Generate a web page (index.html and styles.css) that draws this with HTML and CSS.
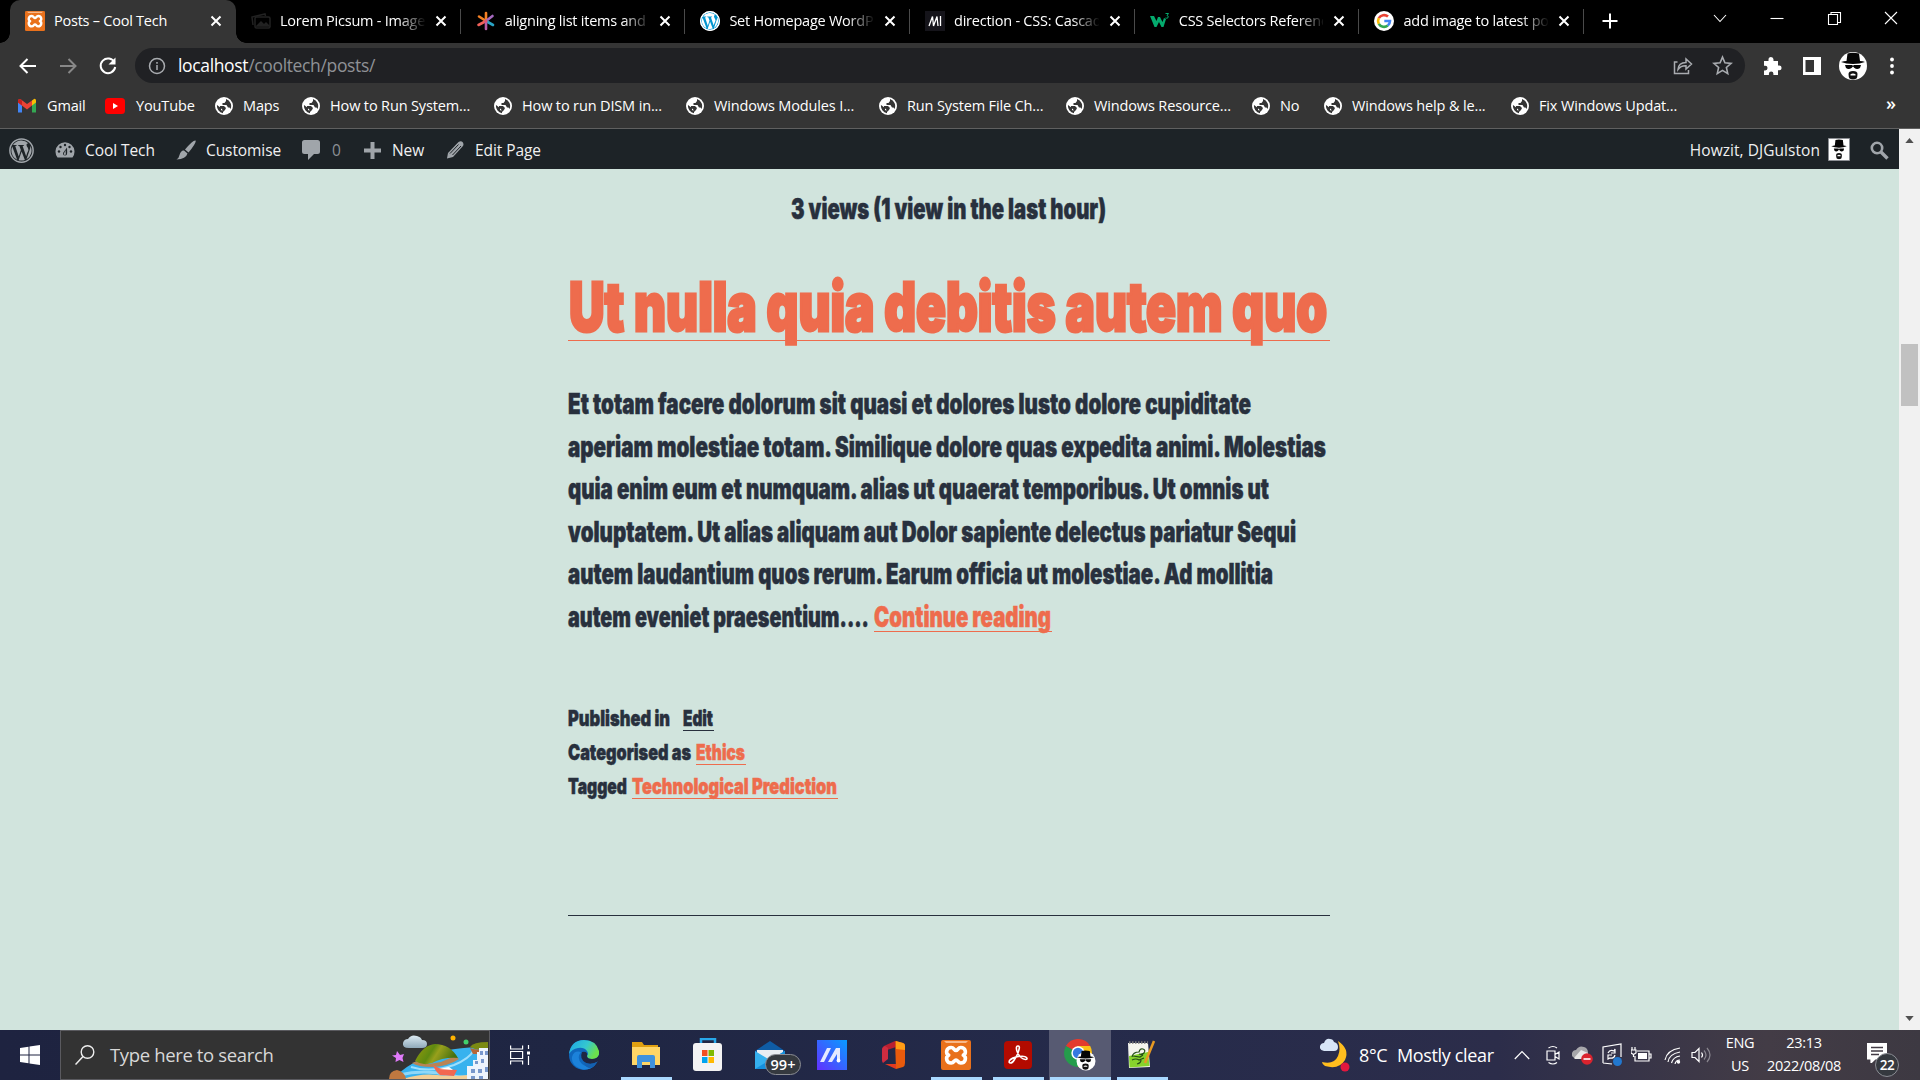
FILE: index.html
```html
<!DOCTYPE html>
<html lang="en">
<head>
<meta charset="utf-8">
<title>Posts – Cool Tech</title>
<link rel="stylesheet" href="styles.css">
</head>
<body>
<svg class="defs" width="0" height="0" aria-hidden="true">
  <defs>
    <symbol id="close" viewBox="0 0 12 12"><path d="M1.5 1.5l9 9M10.500 1.500l-9 9" stroke="#fff" stroke-width="2" fill="none"/></symbol>
    <symbol id="globe" viewBox="0 0 18 18"><circle cx="9" cy="9" r="9" fill="#fff"/><path d="M2 8l4 3v2l2 1v2.200A7.300 7.300 0 0 1 2 8zM11 2v2l-1.500 2H7.500v2h4l1.500 2.500h1.500l1 1.500A7.300 7.300 0 0 0 11 2zM5 9h4l2 2-1 2-2 2-1-3-2-1z" fill="#353535"/></symbol>
    <symbol id="xampp" viewBox="0 0 30 30"><rect width="30" height="30" rx="2" fill="#e9711c"/><path d="M3 1h24l-2 2H5z" fill="#f7b88a"/><path d="M10.200 7.500c-5 0-6 6-2.500 7.700-3.500 1.700-2.500 7.800 2.500 7.800 2.800 0 3-3 4.800-3s2 3 4.800 3c5 0 6-6.100 2.500-7.800 3.500-1.700 2.500-7.700-2.500-7.700-2.800 0-3 3-4.800 3s-2-3-4.800-3z" fill="none" stroke="#fff" stroke-width="3.600" stroke-linejoin="round"/></symbol>
    <symbol id="face" viewBox="0 0 28 28"><path d="M7.500 9L8.500 1.500q5-1.500 11.500 0L21 9q3 0 5 1-5 2-12 2T2 10q3-1 5.500-1zM6 13h7l1 .8 1-.8h7l-1 3q-3 2-5.500 0L14 14.500 12.500 16q-3 2-5.500 0z" fill="#050505"/><path d="M9.500 22q0-3 4.500-3t4.500 3-1 4.500q-3.500 2-7 0-1-1.500-1-4.500z" fill="#111"/><path d="M11.500 22.300q2.500-1.500 5 0v1.300h-5z" fill="#fff"/></symbol>
    <symbol id="wp" viewBox="0 0 20 20"><circle cx="10" cy="10" r="9.300" fill="none" stroke="currentColor" stroke-width="1.200"/><path d="M1.900 10A8.100 8.100 0 0 0 6.500 17.300L2.600 6.700A8 8 0 0 0 1.900 10zM15.500 9.600c0-1-.4-1.700-.7-2.200-.4-.7-.8-1.200-.8-1.900 0-.7.500-1.400 1.400-1.400A8.100 8.100 0 0 0 3.200 5.600h.5c.8 0 2.200-.1 2.200-.1.400 0 .5.600 0 .7l-.9.100 2.800 8.400 1.700-5.100L8.300 6.300 7.500 6.200c-.4 0-.4-.7 0-.7 0 0 1.300.1 2.100.1s2.200-.1 2.200-.1c.4 0 .5.600 0 .7l-.9.100 2.800 8.300.8-2.600c.6-1.100 1-1.800 1-2.400zM10.100 10.700l-2.400 7a8 8 0 0 0 5-.1zM17.100 6.100c.1 1.300-.1 2.300-.6 3.400L14 16.900A8.100 8.100 0 0 0 17.100 6.100z" fill="currentColor"/></symbol>
  </defs>
</svg>

<header class="tabs">
  <div class="tab active">
    <svg class="fav" viewBox="0 0 30 30"><use href="#xampp"/></svg><span class="tab-title">Posts – Cool Tech</span><svg class="x"><use href="#close"/></svg>
  </div>
  <div class="tab">
    <svg class="fav" viewBox="0 0 20 20" fill="none" stroke="#222" stroke-width="1.500"><path d="M2 14L1 6l13-3 .5 2"/><rect x="4" y="6" width="15" height="11" rx="1.500"/><path d="M6 15l4-4 3 3 2-2 3 3z" fill="#222"/></svg><span class="tab-title fade">Lorem Picsum - Images</span><svg class="x"><use href="#close"/></svg>
  </div>
  <div class="tab">
    <svg class="fav" viewBox="0 0 20 20" fill="none" stroke-width="2.600" stroke-linecap="round"><path d="M10 10V2" stroke="#f48024"/><path d="M10 10L3 5.500" stroke="#f48024"/><path d="M10 10l-7.500 4" stroke="#f0605a"/><path d="M10 10l6.500-5" stroke="#a66ac0"/><path d="M10 10l7 4" stroke="#29a3c4"/><path d="M10 10v8" stroke="#b75ca8"/><circle cx="10" cy="10" r="1.500" fill="#e34f6f"/></svg><span class="tab-title fade">aligning list items and text</span><svg class="x"><use href="#close"/></svg>
  </div>
  <div class="tab">
    <svg class="fav" viewBox="0 0 20 20"><circle cx="10" cy="10" r="10" fill="#fff"/><circle cx="10" cy="10" r="9" fill="#0096d0"/><svg width="20" height="20" color="#fff"><use href="#wp"/></svg></svg><span class="tab-title fade">Set Homepage WordPress</span><svg class="x"><use href="#close"/></svg>
  </div>
  <div class="tab">
    <svg class="fav" viewBox="0 0 20 20"><rect width="20" height="20" fill="#15141a"/><path d="M4 15L7.500 5.500 8.500 15 12 5.500 13 15M15.500 5v10" fill="none" stroke="#fff" stroke-width="1.300"/></svg><span class="tab-title fade">direction - CSS: Cascading</span><svg class="x"><use href="#close"/></svg>
  </div>
  <div class="tab">
    <svg class="fav" viewBox="0 0 20 20"><path d="M0 5h4l2.500 5L8 6h2l2.500 5L14 7l2 1-2.500 8h-2L9 11l-2.500 5h-2z" fill="#04aa6d"/><path d="M15.500 2.500h3l-1.500 2q2 .5 1 2.200-1 1-2.500.2" fill="none" stroke="#04aa6d"/></svg><span class="tab-title fade">CSS Selectors Reference</span><svg class="x"><use href="#close"/></svg>
  </div>
  <div class="tab">
    <svg class="fav" viewBox="0 0 20 20" fill="none" stroke-width="2.600"><circle cx="10" cy="10" r="10" fill="#fff"/><path d="M14 5.600A6 6 0 0 0 4.800 7.200" stroke="#ea4335"/><path d="M4.800 7.200a6 6 0 0 0 0 5.600" stroke="#fbbc05"/><path d="M4.800 12.800a6 6 0 0 0 9 1.700" stroke="#34a853"/><path d="M13.800 14.500A6 6 0 0 0 16 10h-5.700" stroke="#4285f4"/></svg><span class="tab-title fade">add image to latest posts</span><svg class="x"><use href="#close"/></svg>
  </div>
  <svg class="plus" viewBox="0 0 16 16"><path d="M8 .5v15M.5 8h15" stroke="#fff" stroke-width="2"/></svg>
  <div class="window-buttons">
    <svg viewBox="0 0 16 16"><path d="M2 5l6 6.500L14 5" /></svg>
    <svg viewBox="0 0 16 16"><path d="M1.500 8.500h13"/></svg>
    <svg viewBox="0 0 16 16"><path d="M2.500 4.500h9v10h-9zM5 4V2.500h9.500v10H12"/></svg>
    <svg viewBox="0 0 16 16"><path d="M2 2l12 12M14 2L2 14"/></svg>
  </div>
</header>

<div class="toolbar">
  <svg class="nav" viewBox="0 0 20 20"><path d="M18 10H3M9.500 3L2.500 10l7 7" stroke="#fff"/></svg>
  <svg class="nav" viewBox="0 0 20 20"><path d="M2 10h15M10.500 3l7 7-7 7" stroke="#888"/></svg>
  <svg class="nav" viewBox="0 0 20 20"><path d="M16.500 6.500A7.300 7.300 0 1 0 17.200 11" stroke="#fff"/><path d="M17.500 1.500v7h-7z" fill="#fff"/></svg>
  <div class="omnibox">
    <svg class="info" viewBox="0 0 18 18"><circle cx="9" cy="9" r="7.500"/><path d="M9 8v5M9 5v1.700"/></svg>
    <span class="url"><b>localhost</b>/cooltech/posts/</span>
    <svg class="share" viewBox="0 0 20 20"><path d="M4.500 6H1.500v11.500h14V14M5 13.500q.5-7 8-7V3l5.500 5-5.500 5V9.800q-5-.3-8 3.700z"/></svg>
    <svg class="star" viewBox="0 0 20 20"><path d="M10 2l2.300 5.500 5.900.5-4.500 3.900L15 17.700l-5-3.100-5 3.100 1.300-5.800L1.800 8l5.900-.5z"/></svg>
  </div>
  <svg class="ext" viewBox="0 0 20 20"><path d="M2 5h4.500V3.500a2.500 2.500 0 0 1 5 0V5H16v4.500h1.200a2.400 2.400 0 0 1 0 4.800H16V19h-4.600v-1.300a2.200 2.200 0 0 0-4.500 0V19H2v-4.600h1.200a2.300 2.300 0 0 0 0-4.700H2z" fill="#fff"/></svg>
  <svg class="panel" viewBox="0 0 18 18"><path d="M0 0h18v18H0z" fill="#fff"/><path d="M2.500 3h8.500v12H2.500z" fill="#353535"/></svg>
  <svg class="avatar" viewBox="0 0 28 28"><circle cx="14" cy="14" r="14" fill="#fff"/><use href="#face"/></svg>
  <svg class="dots" viewBox="0 0 4 18"><circle cx="2" cy="2.500" r="1.900" fill="#fff"/><circle cx="2" cy="9" r="1.900" fill="#fff"/><circle cx="2" cy="15.500" r="1.900" fill="#fff"/></svg>
</div>

<nav class="bookmarks">
  <span><svg class="gm" viewBox="0 0 18 14"><path d="M0 2v12h4V6z" fill="#4285f4"/><path d="M18 2v12h-4V6z" fill="#34a853"/><path d="M14 2l2-1.600Q18 0 18 2v2l-4 3z" fill="#fbbc04"/><path d="M0 4V2Q.5-.5 3 1l6 4.500L14 2v5l-5 4z" fill="#ea4335"/><path d="M0 2Q.5-.5 3 1l1 1v5L0 4z" fill="#c5221f"/></svg>Gmail</span>
  <span><svg class="yt" viewBox="0 0 20 16"><rect width="20" height="16" rx="3.500" fill="red"/><path d="M8 5v6l5-3z" fill="#fff"/></svg>YouTube</span>
  <span><svg class="gl"><use href="#globe"/></svg>Maps</span>
  <span><svg class="gl"><use href="#globe"/></svg>How to Run System...</span>
  <span><svg class="gl"><use href="#globe"/></svg>How to run DISM in...</span>
  <span><svg class="gl"><use href="#globe"/></svg>Windows Modules I...</span>
  <span><svg class="gl"><use href="#globe"/></svg>Run System File Ch...</span>
  <span><svg class="gl"><use href="#globe"/></svg>Windows Resource...</span>
  <span><svg class="gl"><use href="#globe"/></svg>No</span>
  <span><svg class="gl"><use href="#globe"/></svg>Windows help &amp; le...</span>
  <span><svg class="gl"><use href="#globe"/></svg>Fix Windows Updat...</span>
  <span class="more">»</span>
</nav>

<div class="viewport">
  <div class="page">
    <div class="adminbar">
      <span><svg class="i-wp"><use href="#wp"/></svg></span>
      <span><svg class="i-20" viewBox="0 0 20 20"><path d="M2.500 17.500A9.500 9.500 0 1 1 17.500 17.500z" fill="#a0a5aa"/><g fill="#1d2327"><circle cx="4" cy="11.500" r="1.200"/><circle cx="5.500" cy="7" r="1.200"/><circle cx="10" cy="5" r="1.200"/><circle cx="14.500" cy="7" r="1.200"/><circle cx="16" cy="11.500" r="1.200"/><path d="M12 7.500l.2 5.500q0 2.500-2.200 2.500t-2-2.500z"/></g><path d="M10.500 10l.3 3.500a1 1 0 1 1-1.700-.3z" fill="#a0a5aa"/></svg>Cool Tech</span>
      <span><svg class="i-20" viewBox="0 0 20 20"><path d="M19.500.5Q21 2 12.500 12.500L9 9.500Q17 0 19.500.5zM8 10.500l3.500 3Q10 19 .5 19.500 3 18 3.500 15 5 10 8 10.500z" fill="#a0a5aa"/></svg>Customise</span>
      <span class="count"><svg class="i-cm" viewBox="0 0 18 20"><path d="M2.500 0h13Q18 0 18 2.500v9q0 2.500-2.500 2.500H12l-6 6v-6H2.500Q0 14 0 11.500v-9Q0 0 2.500 0z" fill="#a0a5aa"/></svg>0</span>
      <span><svg class="i-pl" viewBox="0 0 17 17"><path d="M8.500 0v17M0 8.500h17" stroke="#a0a5aa" stroke-width="4"/></svg>New</span>
      <span><svg class="i-ed" viewBox="0 0 18 18"><path d="M12.500 1q2.500-1.500 4 0t.5 4l-10 11L1 17.500 2 12z" fill="#a0a5aa"/><path d="M4 12.500l8.500-9M6.500 14l8.500-9" stroke="#1d2327" stroke-width="1"/></svg>Edit Page</span>
      <div class="me">
        <span>Howzit, DJGulston</span>
        <svg class="pic" viewBox="0 0 22 23"><path d="M.5.5h21v22H.5z" fill="#fff" stroke="#8c8f94"/><svg x="2" y="1" width="18" height="20.500" viewBox="0 0 28 28" preserveAspectRatio="none"><use href="#face"/></svg></svg>
        <svg class="find" viewBox="0 0 19 19"><circle cx="7" cy="7" r="5.200" fill="none" stroke="#a0a5aa" stroke-width="2.600"/><path d="M11 11l6.500 6.500" stroke="#a0a5aa" stroke-width="3.400"/></svg>
      </div>
    </div>

    <main class="post">
      <svg class="imp views" width="316" height="30"><text x="0" y="25" textLength="315" lengthAdjust="spacingAndGlyphs">3 views (1 view in the last hour)</text></svg>
      <h2><a><svg class="imp title" width="761" height="74"><text x="1" y="65" textLength="758" lengthAdjust="spacingAndGlyphs">Ut nulla quia debitis autem quo</text></svg></a></h2>
      <div class="excerpt">
        <p><svg class="imp" width="684" height="32"><text y="27" textLength="683" lengthAdjust="spacingAndGlyphs">Et totam facere dolorum sit quasi et dolores Iusto dolore cupiditate</text></svg></p>
        <p><svg class="imp" width="759" height="32"><text y="27" textLength="758" lengthAdjust="spacingAndGlyphs">aperiam molestiae totam. Similique dolore quas expedita animi. Molestias</text></svg></p>
        <p><svg class="imp" width="702" height="32"><text y="27" textLength="701" lengthAdjust="spacingAndGlyphs">quia enim eum et numquam. alias ut quaerat temporibus. Ut omnis ut</text></svg></p>
        <p><svg class="imp" width="729" height="32"><text y="27" textLength="728" lengthAdjust="spacingAndGlyphs">voluptatem. Ut alias aliquam aut Dolor sapiente delectus pariatur Sequi</text></svg></p>
        <p><svg class="imp" width="706" height="32"><text y="27" textLength="705" lengthAdjust="spacingAndGlyphs">autem laudantium quos rerum. Earum officia ut molestiae. Ad mollitia</text></svg></p>
        <p><svg class="imp" width="306" height="32"><text y="27" textLength="301" lengthAdjust="spacingAndGlyphs">autem eveniet praesentium....</text></svg><a><svg class="imp" width="178" height="31"><text y="27" textLength="177" lengthAdjust="spacingAndGlyphs">Continue reading</text></svg></a></p>
      </div>
      <div class="meta">
        <p><svg class="imp" width="115" height="25"><text y="21" textLength="102" lengthAdjust="spacingAndGlyphs">Published in</text></svg><a class="dark"><svg class="imp" width="31" height="25"><text y="21" textLength="30" lengthAdjust="spacingAndGlyphs">Edit</text></svg></a></p>
        <p><svg class="imp" width="128" height="25"><text y="21" textLength="123" lengthAdjust="spacingAndGlyphs">Categorised as</text></svg><a><svg class="imp" width="50" height="25"><text y="21" textLength="49" lengthAdjust="spacingAndGlyphs">Ethics</text></svg></a></p>
        <p><svg class="imp" width="64" height="25"><text y="21" textLength="59" lengthAdjust="spacingAndGlyphs">Tagged</text></svg><a><svg class="imp" width="206" height="25"><text y="21" textLength="205" lengthAdjust="spacingAndGlyphs">Technological Prediction</text></svg></a></p>
      </div>
    </main>
  </div>
  <div class="scrollbar">
    <svg viewBox="0 0 10 6"><path d="M0 6l5-6 5 6z" fill="#505050"/></svg>
    <div class="thumb"></div>
    <svg viewBox="0 0 10 6"><path d="M0 0l5 6 5-6z" fill="#505050"/></svg>
  </div>
</div>

<footer class="taskbar">
  <div class="start"><svg width="20" height="20" viewBox="0 0 20 20"><path d="M0 3l8.500-1.200v7.700H0zM9.500 1.600L20 0v9.500H9.500zM0 10.500h8.500v7.700L0 17zM9.500 10.500H20V20L9.500 18.400z" fill="#fff"/></svg></div>
  <div class="search">
    <svg width="20" height="20" viewBox="0 0 20 20"><circle cx="12.500" cy="7" r="6.300" fill="none" stroke="#eee" stroke-width="1.400"/><path d="M8 11.500L.5 19.500" stroke="#eee" stroke-width="1.500"/></svg>
    <span>Type here to search</span>
    <svg class="art" width="100" height="48" viewBox="0 0 100 48">
      <defs><linearGradient id="hill" x1="0" y1="0" x2="1" y2="0.300"><stop offset="0" stop-color="#9a9c0c"/><stop offset="0.450" stop-color="#5f8a10"/><stop offset="0.600" stop-color="#98a01c"/><stop offset="1" stop-color="#467010"/></linearGradient><linearGradient id="cloud" x2="0" y2="1"><stop offset="0" stop-color="#dcebf2"/><stop offset="1" stop-color="#8fa9ba"/></linearGradient></defs>
      <path d="M4 48Q14 36 38 25 60 16 99 16V48z" fill="#37b2ee"/><path d="M22 36q20 6 43-2 15-6 20-15" fill="none" stroke="#9edffc" stroke-width="2"/><path d="M10 44q25-6 50 0t35-4" fill="none" stroke="#8fd8f8" stroke-width="3"/>
      <path d="M14 48q18-6 34-4t30 0v4z" fill="#f3cf96"/>
      <path d="M23 32q8-4 17 1l12-2 14-6 4 3q-10 7-27 8-14 0-20-4z" fill="#b98455"/><path d="M26 30Q34 14 46 13q15 0 23 14-15-1-26 5-9 3-17-2z" fill="url(#hill)"/>
      <path d="M81 16q3-5 18-5v6q-9 4-18-1z" fill="#7b8a12"/><path d="M81 17q9 3 18 0v6H84z" fill="#b3683a"/>
      <path d="M78 35h6v-6h4v-8h2v-4h9v31H78z" fill="#edf4fc"/><g fill="#7898cc"><path d="M91 20h3v4h-3zM96 20h3v4h-3zM86 30h3v3h-3zM92 28h3v4h-3zM82 38h4v4h-4zM89 38h4v4h-4zM96 36h3v5h-3zM82 45h4v3h-4zM90 45h4v3h-4z"/></g>
      <path d="M44 34l6 3 18 2-3 6-14-1q-5-4-7-10z" fill="#f26850"/><path d="M50 38l10-2 4 3z" fill="#fff"/>
      <path d="M0 48q0-8 8-9 8 2 9 9z" fill="#bf7840"/>
      <path d="M20 17q-7 0-6-5 1-4 5-4 3-5 9-3 4 1 5 4 5 0 5 4t-5 4z" fill="url(#cloud)"/>
      <path d="M8 20l3 4 4-1-1.500 4 1 4-4-2-4 2 .5-4-4-2.500L7 24z" fill="#e17bfa"/><circle cx="64" cy="7" r="2.500" fill="#ffb300"/><circle cx="77" cy="11" r="2.500" fill="#42cf6c"/>
    </svg>
  </div>
  <div class="taskview"><svg width="20" height="20" viewBox="0 0 20 20" fill="none" stroke="#fff" stroke-width="1.200"><path d="M.6.500v3.500h12V.5M.6 19.500V16h12v3.500M.6 6.500h12v7H.6zM18.500 0v4M18.500 11v9"/><path d="M17 6.500h3v3h-3z" fill="#fff" stroke="none"/></svg></div>
  <div class="apps">
    <div class="app"><svg width="30" height="30" viewBox="0 0 30 30"><defs><linearGradient id="eg" x1="0" y1="0" x2="1" y2="0.400"><stop offset="0" stop-color="#1ba3e8"/><stop offset="0.600" stop-color="#35c8cf"/><stop offset="1" stop-color="#6be04c"/></linearGradient></defs><circle cx="15" cy="15" r="15" fill="#0f67bd"/><path d="M0 14Q2 0 15 0 27 0 30 11q1 8-7 8-5 0-5-3 2-2 0-5-3-4-9-3-6 1-9 6z" fill="url(#eg)"/><path d="M12 12q-5 6 1 12 6 5 13 1-6 6-14 4Q2 25 3 17q2-7 9-5z" fill="#1c82da"/><path d="M13 12q-3 7 4 11 5 2 11-1l2-2V15q-2 4-7 4-5 0-5-3 1-5-5-4z" fill="#1f2643"/><path d="M15 22q6 4 13 0-3 6-8 6-5-2-5-6z" fill="#1460b0"/></svg></div>
    <div class="app run"><svg width="30" height="28" viewBox="0 0 30 28"><path d="M1 1h10l2 3h14v6H1z" fill="#e0a010"/><path d="M1 6h28v18H1z" fill="#ffd666"/><path d="M6 27V16q0-2 2-2h14q2 0 2 2v11h-5v-6h-8v6z" fill="#3f92dd"/></svg></div>
    <div class="app"><svg width="30" height="34" viewBox="0 0 30 34"><path d="M8 7V1h14v6" fill="none" stroke="#28a8ea" stroke-width="2.500"/><rect y="5" width="29" height="28" rx="3" fill="#f3f3f3"/><path d="M9 12h5.500v6H9z" fill="#f25022"/><path d="M15.500 12H21v6h-5.500z" fill="#7fba00"/><path d="M9 19h5.500v6H9z" fill="#00a4ef"/><path d="M15.500 19H21v6h-5.500z" fill="#ffb900"/></svg></div>
    <div class="app"><svg width="30" height="28" viewBox="0 0 30 28"><path d="M0 10L15 0l15 10v10H0z" fill="#0f5ca5"/><path d="M2 9h26v9H2z" fill="#e9edf2"/><path d="M0 10l15 9 15-9v18H0z" fill="#35b0ee"/><path d="M0 28L28 11l2-1v18z" fill="#1590dc"/></svg><span class="badge">99+</span></div>
    <div class="app"><svg width="30" height="30" viewBox="0 0 30 30"><defs><linearGradient id="mg" x1="0" y1="1" x2="1" y2="0"><stop offset="0" stop-color="#6330ff"/><stop offset="1" stop-color="#079cff"/></linearGradient></defs><path d="M0 0h30v30H0z" fill="url(#mg)"/><path d="M3 22L10 8h4L7 22zM11 22l8-14h4v11h-3v-5l-5 8z" fill="#e5e9ff"/><circle cx="21.500" cy="20.500" r="1.900" fill="#fff"/></svg></div>
    <div class="app"><svg width="24" height="28" viewBox="0 0 24 28"><path d="M13 0L3 4.500Q0 6 0 9v11l5-2V9l9-3z" fill="#b92031"/><path d="M0 9Q0 6 3 5l3 2v11l-5 4q-1-1-1-3z" fill="#ce2c40"/><path d="M13 0l8 2q2 .5 2 3v17q0 3-2 4l-7 2z" fill="#e85a0c"/><path d="M14 0l7 2q2 .5 2 3v4l-9-1z" fill="#ff9d16"/><path d="M3 23h11v5z" fill="#e33a20"/></svg></div>
    <div class="app run"><svg width="30" height="30"><use href="#xampp"/></svg></div>
    <div class="app run"><svg width="28" height="28" viewBox="0 0 28 28"><rect width="28" height="28" rx="4" fill="#b30b00"/><path d="M12.500 8q-.5-3 1.500-3t1 3.500q-1 5-4.500 10-2 3.500-4 3.500t-1-2.500q2.500-3 9-4t8 1-1 2q-5-.5-8-7-1-2-1-3.500z" fill="none" stroke="#fff" stroke-width="1.600"/></svg></div>
    <div class="app run focus"><svg width="32" height="32" viewBox="0 0 32 32"><path d="M14 14L1.900 7A14 14 0 0 1 26.200 7z" fill="#e33b2e"/><path d="M14 14L1.900 7A14 14 0 0 0 14 28z" fill="#259c4c"/><path d="M14 14h14A14 14 0 0 0 26.200 7H13z" fill="#fbc116"/><path d="M14 14v14A14 14 0 0 0 28 14z" fill="#fbc116"/><circle cx="14" cy="14" r="6.700" fill="#fff"/><circle cx="14" cy="14" r="5.200" fill="#3679e0"/><circle cx="22" cy="22" r="9.500" fill="#fff"/><svg x="11.500" y="11" width="20" height="20" viewBox="0 0 28 28"><use href="#face"/></svg></svg></div>
    <div class="app run"><svg width="30" height="30" viewBox="0 0 30 30"><path d="M1 3h20l2 24-21 1z" fill="#f4f5ef"/><path d="M2 16l19-4 1.500 14-20 1.500z" fill="#86d32c"/><path d="M2 2.500h19" stroke="#777" stroke-width="2.500" stroke-dasharray="1.500 1.500"/><path d="M5 17q1-5 7-5 1-4 4-3t1 4q-2 2-5 1M6 16l7 1 3-2M5 20q4-2 7 0l5-2M10 24q4-1 4-4" fill="none" stroke="#234d17" stroke-width="1.200"/><path d="M27 1L18 23" stroke="#e89a22" stroke-width="2.500"/></svg></div>
  </div>
  <div class="tray">
    <svg class="moon" width="30" height="34" viewBox="0 0 30 34"><path d="M18 3q12 8 7 19-6 10-20 6Q2 26 2 24q12 3 16-6 3-7 0-15z" fill="#ffbe1e"/><path d="M4 13q-5-1-4-5 1-3 4-3 2-5 6-4 3 0 4 3 4 1 4 5t-4 4z" fill="#d7e5f7"/><circle cx="25" cy="29" r="4.500" fill="#e3173e"/></svg>
    <span class="temp">8°C</span><span class="sky">Mostly clear</span>
    <svg class="up" width="16" height="10" viewBox="0 0 16 10"><path d="M.8 9L8 1.500 15.200 9"/></svg>
    <svg class="t1" width="15" height="20" viewBox="0 0 15 20"><path d="M1 6h8v9H1zM9 9.500l4-2.500v7l-4-2.500M2.500 3Q7 0 11 3M2.500 17.500q4.500 3 8.500 0"/></svg>
    <svg class="t2" width="21" height="20" viewBox="0 0 21 20"><path d="M3 13q-4-1-3-5 1-3 4-3 3-5 8-3 4 1 4 6v5z" fill="#a7a7ab" stroke="none"/><path d="M2 13l7-8 7 3v6H3z" fill="#e7e7e7" stroke="none"/><circle cx="15" cy="14" r="5.800" fill="#d9232e" stroke="none"/><path d="M11.500 14h7" stroke-width="1.600"/></svg>
    <svg class="t3" width="20" height="24" viewBox="0 0 20 24"><path d="M1 20V4l18-3v13M1 20l9 1M6 10q2-4 6-2l1-2v4h-4M13 12q-1 4-5 3l-2 1v-4h4"/><circle cx="15.500" cy="18.500" r="4.500" fill="#2278cf" stroke="none"/></svg>
    <svg class="t4" width="21" height="16" viewBox="0 0 21 16"><path d="M6 4h12v10H4v-5M18 7h2v4h-2M1 0v3M4 0v3M0 3h5v3L2.500 7.500 0 6zM2.500 7v3"/><path d="M7 6h9v6H7z" fill="#fff" stroke="none"/></svg>
    <svg class="t5" width="17" height="17" viewBox="0 0 17 17"><path d="M1 13Q3 3 16 1M4 15Q5 7 16 5M7.500 16Q9 10 16 9M11 17q1-4 5-4" /><circle cx="14.500" cy="15" r="1.700" fill="#fff" stroke="none"/></svg>
    <svg class="t6" width="20" height="16" viewBox="0 0 20 16"><path d="M1 5.500h3L8 1.500v13l-4-4H1zM10.500 5.500q2 2.500 0 5"/><path d="M13 3.500q4 4.500 0 9M16 1q6 7 0 14" stroke="#8a8790"/></svg>
    <div class="stack lang"><span>ENG</span><span>US</span></div>
    <div class="stack clock"><span>23:13</span><span>2022/08/08</span></div>
    <div class="note"><svg width="20" height="20" viewBox="0 0 20 20"><path d="M0 0h20v16H8l-4 4v-4H0z" fill="#fff"/><path d="M4 4.500h12M4 8h12M4 11.500h8" stroke="#433c46" stroke-width="1.300"/></svg><span class="num">22</span></div>
  </div>
</footer>
</body>
</html>
```
FILE: styles.css
```css
* { box-sizing: border-box; margin: 0; padding: 0; }
body {
  width: 1920px; height: 1080px; overflow: hidden;
  display: flex; flex-direction: column;
  font-family: "Open Sans", "Noto Sans", sans-serif;
  color: #fff; background: #353535;
}
svg { display: block; flex: none; }
.defs { position: absolute; }

/* browser tabs */
.tabs { height: 43px; background: #000; display: flex; padding-left: 10px; flex: none; }
.tab {
  width: 224.700px; height: 43px; display: flex; align-items: center; padding: 0 14px 2px 15px;
  background: linear-gradient(#4a4a4a, #4a4a4a) right 0 top 9px / 1px 25px no-repeat;
}
.tab.active { width: 226px; background: #353535; border-radius: 10px 10px 0 0; position: relative; }
.tab.active::before, .tab.active::after { content: ""; position: absolute; bottom: 0; width: 10px; height: 10px; }
.tab.active::before { left: -10px; background: radial-gradient(circle at 0 0, #000 9.500px, #353535 10px); }
.tab.active::after { right: -10px; background: radial-gradient(circle at 100% 0, #000 9.500px, #353535 10px); }
.fav { width: 20px; height: 20px; margin-right: 9px; }
.tab-title { width: 146px; white-space: nowrap; overflow: hidden; font-size: 14.500px; letter-spacing: -0.240px; }
.fade { -webkit-mask-image: linear-gradient(90deg, #000 118px, transparent 146px); mask-image: linear-gradient(90deg, #000 118px, transparent 146px); }
.x { width: 12px; height: 12px; margin-left: 10px; }
.plus { width: 16px; height: 16px; margin: 13px 0 0 18px; }
.window-buttons { display: flex; gap: 41px; margin: 10px 21px 0 auto; }
.window-buttons svg { width: 16px; height: 16px; fill: none; stroke: #fff; stroke-width: 1.100; }

/* address row */
.toolbar { height: 45px; display: flex; align-items: center; padding: 0 25px 0 18px; flex: none; }
.nav { width: 20px; height: 20px; margin-right: 20px; fill: none; stroke-width: 2; }
.nav:nth-of-type(3) { margin-right: 17px; }
.omnibox { width: 1610px; height: 35px; border-radius: 18px; background: #202124; display: flex; align-items: center; padding: 0 12px 0 13px; }
.omnibox svg { fill: none; stroke: #a9acb0; stroke-width: 1.500; }
.info { width: 18px; height: 18px; }
.url { margin: -1px 0 0 12px; flex: 1; font-size: 17.500px; letter-spacing: -0.350px; color: #8f9296; }
.url b { font-weight: 400; color: #fff; }
.share { width: 20px; height: 20px; margin-right: 19px; }
.star { width: 21px; height: 21px; }
.ext { width: 20px; height: 20px; margin-left: 17px; }
.panel { width: 18px; height: 18px; margin-left: 21px; }
.avatar { width: 28px; height: 28px; margin-left: 18px; }
.dots { width: 4px; height: 18px; margin-left: 23px; }

/* bookmarks */
.bookmarks {
  height: 41px; flex: none; border-bottom: 1px solid #606060; padding: 0 0 5px 18px;
  display: grid; align-items: center; font-size: 14.500px; letter-spacing: -0.140px; white-space: nowrap;
  grid-template-columns: 87px 109px 87px 192px 192px 193px 187px 186px 72px 187px 373px auto;
}
.bookmarks span { display: flex; align-items: center; }
.gm { width: 18px; height: 15px; margin-right: 11px; }
.yt { width: 20px; height: 16px; margin-right: 11px; }
.gl { width: 18px; height: 18px; margin: 0 10px 0 1px; }
.bookmarks .more { font-size: 18px; font-weight: 600; padding: 0 0 5px 3px; }

/* page */
.viewport { flex: 1; display: flex; min-height: 0; }
.page { width: 1899px; background: #d1e4dd; }
.adminbar {
  height: 40px; background: #1d2327; color: #f0f0f1; display: grid; align-items: center;
  grid-template-columns: 46px 121px 126px 62px 82px 120px 1fr; padding: 2px 10px 0 9px;
  font-size: 15.500px; letter-spacing: -0.080px; white-space: nowrap;
}
.adminbar span { display: flex; align-items: center; }
.i-wp { width: 25px; height: 25px; color: #a0a5aa; }
.i-20 { width: 20px; height: 20px; margin-right: 10px; }
.i-cm { width: 18px; height: 20px; margin-right: 12px; }
.count { color: #8c9095; }
.i-pl { width: 17px; height: 17px; margin-right: 11px; }
.i-ed { width: 18px; height: 18px; margin-right: 11px; }
.me { display: flex; justify-content: flex-end; align-items: center; letter-spacing: 0.050px; }
.pic { width: 22px; height: 23px; margin: -1px 20px 0 8px; }
.find { width: 19px; height: 19px; }

/* post content */
.post { width: 762px; margin: 0 0 0 568px; padding-top: 25px; }
.imp { overflow: visible; color: #28303d; }
.imp text {
  font-family: Inter, "Open Sans", sans-serif; font-weight: 900; font-size: 28px;
  fill: currentColor; stroke: currentColor; stroke-width: 0.500px;
}
.views { margin: 0 auto; }
.title text { font-size: 67px; stroke-width: 3px; }
.post a { display: block; border-bottom: 1px solid #ee6c4d; align-self: flex-start; }
.post a .imp { color: #ee6c4d; }
.post a.dark { border-color: #28303d; }
.post a.dark .imp { color: #28303d; }
h2 { height: 75px; margin-top: 42px; }
.excerpt { margin-top: 46px; }
.excerpt p { height: 42.500px; display: flex; }
.meta { margin-top: 63px; border-bottom: 1px solid #28303d; height: 211px; }
.meta p { height: 34px; display: flex; }
.meta .imp text { font-size: 22px; }

.scrollbar { width: 21px; background: #f1f1f1; display: flex; flex-direction: column; align-items: center; padding: 9px 0; }
.scrollbar svg { width: 9px; height: 5px; }
.thumb { width: 17px; height: 62px; background: #c1c1c1; margin: 201px 0 auto; }

/* taskbar */
.taskbar { height: 50px; flex: none; display: flex; align-items: stretch; background: linear-gradient(90deg, #1e2340 0%, #1f2643 30%, #262b4b 60%, #2c2d4a 78%, #433c46 92%, #3d3942 100%); }
.start { width: 60px; display: grid; place-items: center; }
.search { width: 430px; background: #333; border: 1px solid #5a5a5f; display: flex; align-items: center; padding-left: 14px; color: #d8d8d8; font-size: 18.500px; letter-spacing: -0.360px; }
.search span { margin: -2px 0 0 15px; flex: 1; }
.art { align-self: flex-end; }
.taskview { width: 63px; padding: 15px 0 0 20px; }
.apps { display: flex; }
.app { width: 62px; display: grid; place-items: center; position: relative; }
.run { background: linear-gradient(#a9d8ff, #a9d8ff) center bottom / 51px 3px no-repeat; }
.focus { background: linear-gradient(#a9d8ff, #a9d8ff) center bottom / 61px 3px no-repeat, #575a72; }
.badge, .num { position: absolute; border: 1px solid #8b8d94; background: #35393f; font-weight: 600; border-radius: 11px; text-align: center; }
.badge { left: 26px; top: 24px; width: 36px; height: 21px; font-size: 14.500px; line-height: 19px; }
.tray { flex: 1; display: flex; align-items: center; padding-left: 147px; font-size: 18px; letter-spacing: -0.350px; white-space: nowrap; }
.tray svg { fill: none; stroke: #fff; stroke-width: 1.200; }
.tray .moon { stroke: none; }
.temp { width: 38px; margin-left: 9px; }
.sky { width: 117px; }
.t1 { margin-left: 16px; }
.t2 { margin-left: 11px; }
.t3 { margin-left: 9px; }
.t4 { margin-left: 9px; }
.t5 { margin-left: 12px; }
.t6 { margin-left: 10px; }
.stack { display: flex; flex-direction: column; align-items: center; font-size: 14.500px; line-height: 22.500px; letter-spacing: -0.300px; margin-top: -1px; }
.lang { width: 58px; }
.clock { width: 70px; }
.note { margin-left: 28px; position: relative; margin-top: -4px; }
.num { left: 8px; top: 10px; width: 24px; height: 24px; border-radius: 12px; font-size: 13.500px; line-height: 22px; }
```
